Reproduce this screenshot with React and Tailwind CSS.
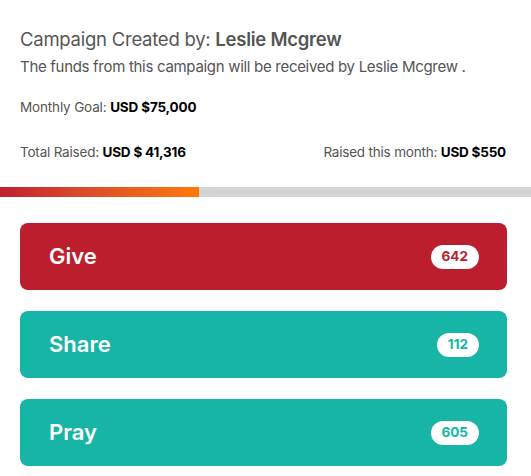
import React from "react";

const buttons = [
  { label: "Give", count: 642, bg: "bg-[#bd1e2d]", text: "text-[#bd1e2d]" },
  { label: "Share", count: 112, bg: "bg-[#17b5a6]", text: "text-[#17b5a6]" },
  { label: "Pray", count: 605, bg: "bg-[#17b5a6]", text: "text-[#17b5a6]" },
];

export default function App() {
  return (
    <div className="w-[531px] h-[476px] bg-white font-['Inter',sans-serif] overflow-hidden">
      <div className="px-5 pt-[27px]">
        <h1 className="text-[18.5px] leading-[24px] text-[#555] tracking-[-0.25px]">
          Campaign Created by: <span className="font-semibold">Leslie Mcgrew</span>
        </h1>
        <p className="mt-[6px] text-[15px] leading-[20px] text-[#555] tracking-[-0.3px]">
          The funds from this campaign will be received by Leslie Mcgrew .
        </p>
        <p className="mt-[21px] text-[13.5px] leading-[18px] text-[#555] tracking-[-0.15px]">
          Monthly Goal: <span className="font-bold text-black">USD $75,000</span>
        </p>
        <div className="mt-[27px] flex justify-between text-[13.5px] leading-[18px] text-[#555] tracking-[-0.2px] pr-[5px]">
          <span>
            Total Raised: <span className="font-bold text-black">USD $ 41,316</span>
          </span>
          <span>
            Raised this month: <span className="font-bold text-black">USD $550</span>
          </span>
        </div>
      </div>
      <div className="mt-[26px] h-[10px] w-full bg-[#d3d3d3]">
        <div className="h-full w-[199px] bg-gradient-to-r from-[#c01f2f] to-[#ff7a00]" />
      </div>
      <div className="px-5 pt-[26px] flex flex-col gap-[21px]">
        {buttons.map((b) => (
          <div
            key={b.label}
            className={`${b.bg} h-[67px] w-[487px] rounded-[8px] flex items-center justify-between pl-[29px] pr-[28px]`}
          >
            <span className="text-white font-semibold text-[22px]">{b.label}</span>
            <span
              className={`bg-white ${b.text} rounded-full h-[24px] min-w-[42px] px-[11px] flex items-center justify-center text-[13.5px] font-bold`}
            >
              {b.count}
            </span>
          </div>
        ))}
      </div>
    </div>
  );
}
